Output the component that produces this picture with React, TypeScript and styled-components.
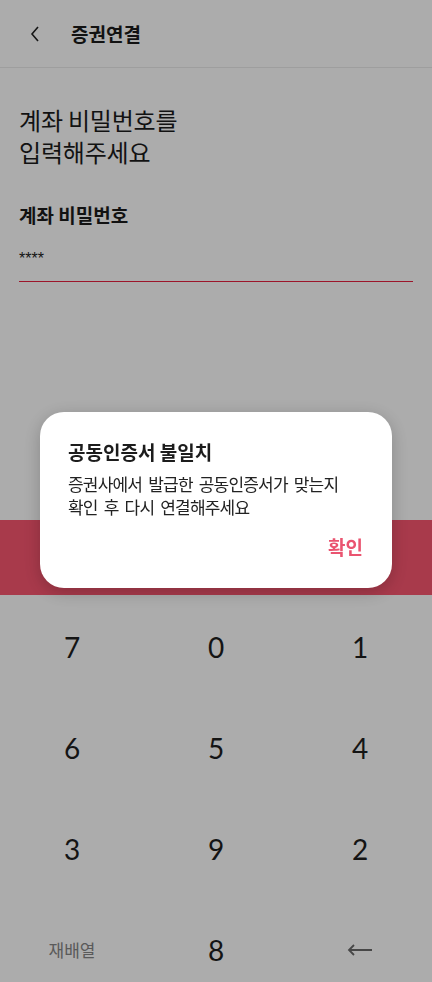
import styled, { createGlobalStyle } from "styled-components";

const GlobalStyle = createGlobalStyle`
  html, body {
    margin: 0;
    padding: 0;
    overflow: hidden;
    background: #ffffff;
  }
  * { box-sizing: border-box; }
  body {
    font-family: "Noto Sans CJK KR", "Noto Sans", sans-serif;
    color: #1c1c1c;
  }
`;

const Page = styled.div`
  width: 432px;
  height: 982px;
  display: flex;
  flex-direction: column;
  overflow: hidden;
  background: #ffffff;

  & > * {
    flex-shrink: 0;
  }
`;

const Header = styled.header`
  height: 68px;
  display: flex;
  align-items: center;
  gap: 27px;
  padding: 0 26px;
  border-bottom: 1px solid #eaeaea;
`;

const BackButton = styled.button`
  width: 18px;
  height: 24px;
  padding: 0;
  border: 0;
  background: none;
  display: flex;
  align-items: center;
  justify-content: center;
`;

const Title = styled.h1`
  margin: 0;
  font-size: 19px;
  font-weight: 700;
  line-height: 24px;
`;

const Content = styled.div`
  padding: 36px 19px 0;
`;

const Heading = styled.h2`
  margin: 0;
  font-size: 24px;
  font-weight: 400;
  line-height: 32px;
  letter-spacing: -0.2px;
`;

const Label = styled.div`
  margin-top: 35px;
  font-size: 19px;
  font-weight: 700;
  line-height: 24px;
`;

const Field = styled.div`
  margin-top: 20px;
  padding-bottom: 10px;
  font-family: "Liberation Sans", sans-serif;
  font-size: 16px;
  line-height: 24px;
  border-bottom: 1.5px solid #e8203f;
`;

const ConfirmBar = styled.button`
  margin-top: 238px;
  height: 75px;
  width: 100%;
  border: 0;
  background: #fa5670;
  color: #ffffff;
  font-family: inherit;
  font-size: 18px;
  font-weight: 700;
`;

const Keypad = styled.div`
  display: grid;
  grid-template-columns: repeat(3, 144px);
  grid-auto-rows: 101px;
  margin-top: 1px;
`;

const Key = styled.button<{ $muted?: boolean }>`
  border: 0;
  background: none;
  padding: 0;
  display: flex;
  align-items: center;
  justify-content: center;
  font-family: ${(p) => (p.$muted ? `"Noto Sans CJK KR", sans-serif` : `Lato, sans-serif`)};
  font-size: ${(p) => (p.$muted ? "17px" : "28px")};
  color: ${(p) => (p.$muted ? "#868686" : "#1e1e1e")};
`;

const Overlay = styled.div`
  position: fixed;
  inset: 0;
  background: rgba(0, 0, 0, 0.325);
  display: flex;
  justify-content: center;
  align-items: flex-start;
  padding-top: 412px;
`;

const Dialog = styled.div`
  width: 352px;
  background: #ffffff;
  border-radius: 24px;
  padding: 28px 29px 29px 28px;
  box-shadow: 0 4px 18px rgba(0, 0, 0, 0.22);
  display: flex;
  flex-direction: column;
`;

const DialogTitle = styled.div`
  font-size: 19px;
  font-weight: 700;
  line-height: 24px;
`;

const DialogBody = styled.p`
  margin: 8px 0 0;
  font-size: 17px;
  line-height: 23px;
  letter-spacing: -0.8px;
  word-spacing: 3px;
  color: #222;
`;

const DialogAction = styled.button`
  align-self: flex-end;
  margin-top: 17px;
  padding: 0;
  border: 0;
  background: none;
  font-family: inherit;
  font-size: 19px;
  font-weight: 700;
  line-height: 24px;
  color: #ea5470;
`;

const keys = ["7", "0", "1", "6", "5", "4", "3", "9", "2"];

export default function App() {
  return (
    <>
      <GlobalStyle />
      <Page>
        <Header>
          <BackButton aria-label="back">
            <svg width="12" height="18" viewBox="0 0 12 18">
              <path d="M9 2 L3 9 L9 16" fill="none" stroke="#222" strokeWidth="1.6" />
            </svg>
          </BackButton>
          <Title>증권연결</Title>
        </Header>
        <Content>
          <Heading>
            계좌 비밀번호를
            <br />
            입력해주세요
          </Heading>
          <Label>계좌 비밀번호</Label>
          <Field>****</Field>
        </Content>
        <ConfirmBar>확인</ConfirmBar>
        <Keypad>
          {keys.map((k) => (
            <Key key={k}>{k}</Key>
          ))}
          <Key $muted>재배열</Key>
          <Key>8</Key>
          <Key aria-label="delete">
            <svg width="26" height="14" viewBox="0 0 26 14">
              <path d="M25 7 H2 M7 2 L2 7 L7 12" fill="none" stroke="#6a6a6a" strokeWidth="1.8" />
            </svg>
          </Key>
        </Keypad>
      </Page>
      <Overlay>
        <Dialog>
          <DialogTitle>공동인증서 불일치</DialogTitle>
          <DialogBody>
            증권사에서 발급한 공동인증서가 맞는지
            <br />
            확인 후 다시 연결해주세요
          </DialogBody>
          <DialogAction>확인</DialogAction>
        </Dialog>
      </Overlay>
    </>
  );
}
